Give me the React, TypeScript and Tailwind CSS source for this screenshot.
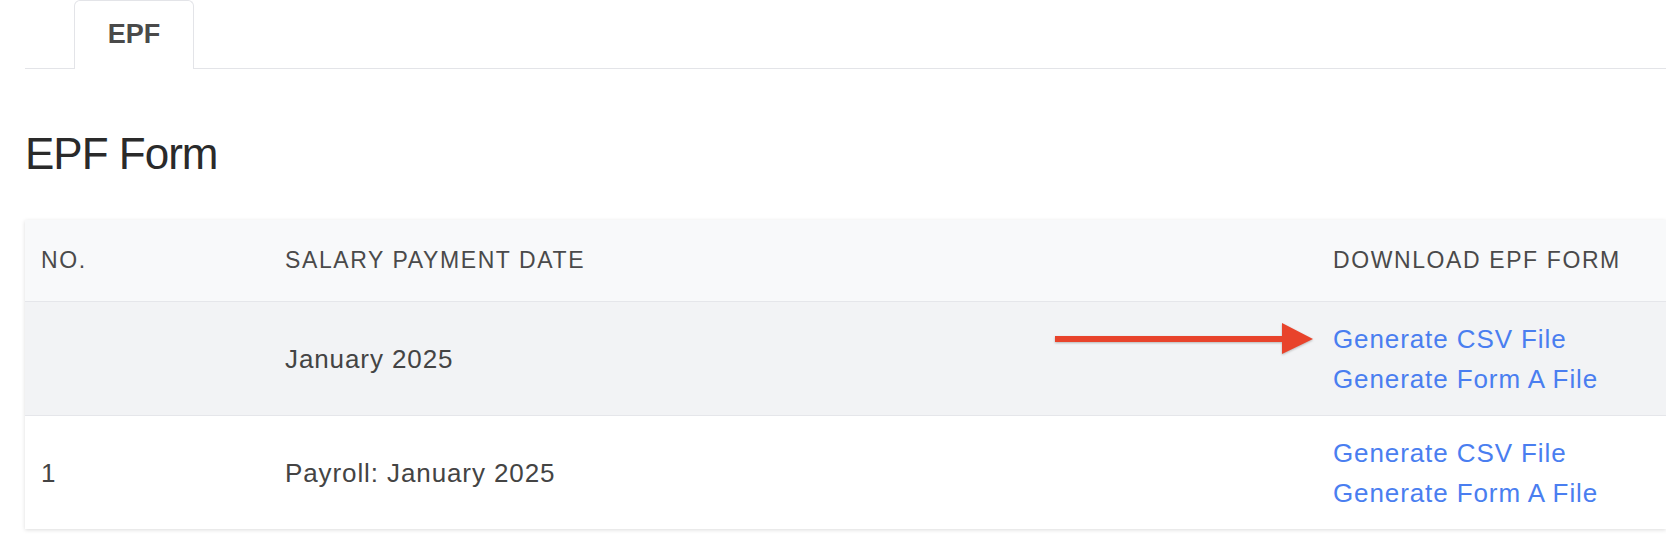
import React from "react";

const rows = [
  { no: "", label: "January 2025", highlight: true },
  { no: "1", label: "Payroll: January 2025", highlight: false },
];

function Arrow() {
  return (
    <svg
      className="absolute left-[1025px] top-[100px] drop-shadow-[0_1px_1px_rgba(0,0,0,0.25)]"
      width="266"
      height="40"
      viewBox="0 0 266 40"
    >
      <rect x="5" y="16" width="230" height="6" fill="#e8432b" />
      <polygon points="232,3 263,19 232,34" fill="#e8432b" />
    </svg>
  );
}

export default function App() {
  return (
    <div className="min-h-screen bg-white pl-[25px] font-['Liberation_Sans',Arial,sans-serif]">
      {/* tabs */}
      <div className="flex h-[69px]">
        <div className="w-[49px] border-b border-[#e3e4e8]" />
        <div className="flex w-[120px] items-center justify-center rounded-t-md border border-b-0 border-[#e3e4e8] pb-[2px] text-[27px] font-bold text-[#4a4a4a]">
          EPF
        </div>
        <div className="flex-1 border-b border-[#e3e4e8]" />
      </div>

      <h1 className="mt-[63px] text-[44px] leading-none tracking-[-1px] text-[#2a2a2a]">EPF Form</h1>

      <div className="relative mt-[44px] bg-white shadow-[0_1px_4px_rgba(0,0,0,0.14)]">
        <div className="grid h-[82px] grid-cols-[260px_1048px_1fr] items-center border-b border-[#e5e6ea] bg-[#f8f9fa] text-[23px] leading-none tracking-[1.6px] text-[#4a4a4a]">
          <div className="pl-4">NO.</div>
          <div>SALARY PAYMENT DATE</div>
          <div>DOWNLOAD EPF FORM</div>
        </div>

        {rows.map((r, i) => (
          <div
            key={i}
            className={
              "grid grid-cols-[260px_1048px_1fr] items-center text-[26px] tracking-[0.9px] text-[#444] " +
              (r.highlight ? "h-[114px] border-b border-[#e5e6ea] bg-[#f2f3f5]" : "h-[113px] bg-white")
            }
          >
            <div className="pl-4 leading-none">{r.no}</div>
            <div className="leading-none">{r.label}</div>
            <div className="flex flex-col leading-[40px] text-[#4a7ef0]">
              <a href="#" className="w-fit">Generate CSV File</a>
              <a href="#" className="w-fit">Generate Form A File</a>
            </div>
          </div>
        ))}

        <Arrow />
      </div>
    </div>
  );
}
